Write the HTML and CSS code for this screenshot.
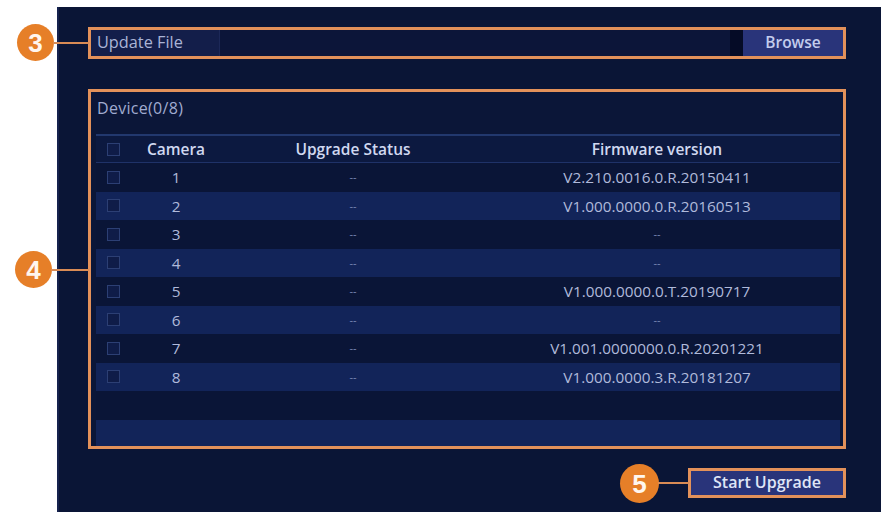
FILE: index.html
```html
<!DOCTYPE html>
<html>
<head>
<meta charset="utf-8">
<link rel="stylesheet" href="styles.css">
</head>
<body>
<div class="page">
  <div class="panel">
    <div class="file-row">
      <span class="file-label">Update File</span>
      <span class="file-input"></span>
      <span class="file-gap"></span>
      <span class="browse">Browse</span>
    </div>
    <div class="device">
      <div class="device-title">Device(0/8)</div>
      <div class="table">
        <div class="row head"><span class="cb"><i></i></span><span>Camera</span><span>Upgrade Status</span><span>Firmware version</span></div>
        <div class="row odd"><span class="cb"><i></i></span><span>1</span><span class="dash">--</span><span>V2.210.0016.0.R.20150411</span></div>
        <div class="row even"><span class="cb"><i></i></span><span>2</span><span class="dash">--</span><span>V1.000.0000.0.R.20160513</span></div>
        <div class="row odd"><span class="cb"><i></i></span><span>3</span><span class="dash">--</span><span class="dash">--</span></div>
        <div class="row even"><span class="cb"><i></i></span><span>4</span><span class="dash">--</span><span class="dash">--</span></div>
        <div class="row odd"><span class="cb"><i></i></span><span>5</span><span class="dash">--</span><span>V1.000.0000.0.T.20190717</span></div>
        <div class="row even"><span class="cb"><i></i></span><span>6</span><span class="dash">--</span><span class="dash">--</span></div>
        <div class="row odd"><span class="cb"><i></i></span><span>7</span><span class="dash">--</span><span>V1.001.0000000.0.R.20201221</span></div>
        <div class="row even"><span class="cb"><i></i></span><span>8</span><span class="dash">--</span><span>V1.000.0000.3.R.20181207</span></div>
        <div class="row odd empty"></div>
        <div class="row even empty"></div>
      </div>
    </div>
    <div class="actions">
      <span class="start">Start Upgrade</span>
    </div>
  </div>

  <div class="callout c3"><span class="num">3</span></div>
  <div class="leader l3"></div>
  <div class="callout c4"><span class="num">4</span></div>
  <div class="leader l4"></div>
  <div class="callout c5"><span class="num">5</span></div>
  <div class="leader l5"></div>
</div>
</body>
</html>
```

FILE: styles.css
```css
* { box-sizing: border-box; }
html, body { margin: 0; padding: 0; background: #ffffff; }
body { font-family: "Open Sans", "Noto Sans", sans-serif; }

.page {
  position: relative;
  width: 881px;
  height: 512px;
  overflow: hidden;
  padding: 7px 0 0 57px;
  background: #ffffff;
}

.panel {
  height: 505px;
  background: #0a1536;
  border-left: 2px solid #15224e;
  padding: 20px 35px 0 29px;
  display: flex;
  flex-direction: column;
}

/* Update file row */
.file-row {
  height: 32px;
  border: 3px solid #e3915a;
  display: flex;
  color: #aab4d6;
}
.file-label {
  width: 128px;
  background: #131e4a;
  padding-left: 6px;
  line-height: 25px;
  font-size: 16.3px;
}
.file-input {
  flex: 1;
  background: #0c1539;
  border-left: 1px solid #1c2858;
}
.file-gap {
  width: 13px;
  background: #050b26;
}
.browse {
  width: 100px;
  background: #29347a;
  text-align: center;
  line-height: 25px;
  color: #c3cced;
  font-size: 15.5px;
  font-weight: 600;
}

/* Device box */
.device {
  margin-top: 30px;
  height: 360px;
  border: 3px solid #e3915a;
  padding: 0 3px 0 5px;
  overflow: hidden;
  background: #0b1638;
}
.device-title {
  height: 42px;
  padding-top: 5px;
  line-height: 22px;
  font-size: 16px;
  color: #a0abd0;
  padding-left: 1px;
  letter-spacing: 0.3px;
}

.table {
  border-top: 2px solid #22386e;
}
.row {
  display: grid;
  grid-template-columns: 34px 92px 262px 346px;
  height: 28.5px;
  align-items: center;
  font-size: 15.3px;
  color: #b0badb;
}
.row > span { text-align: center; line-height: 20px; }
.row > span.cb { display: flex; justify-content: center; }
.cb i {
  display: block;
  width: 13px;
  height: 13px;
  border: 1px solid #2c3f74;
  background: #0f1c48;
}
.head {
  height: 27px;
  background: #0c1940;
  border-bottom: 1px solid #1f3268;
  color: #d0d8f0;
  font-size: 15.5px;
  font-weight: 600;
}
.odd { background: #0a1537; }
.even { background: #122459; }
.dash { color: #7a88b6; font-size: 11px !important; }

/* Start upgrade */
.actions {
  margin-top: 19px;
  display: flex;
  justify-content: flex-end;
}
.start {
  width: 158px;
  height: 30px;
  border: 3px solid #e3915a;
  background: #29347a;
  color: #dfe5f6;
  font-size: 16px;
  font-weight: 600;
  text-align: center;
  line-height: 23px;
}

/* Callouts (annotation overlay) */
.callout {
  position: absolute;
  width: 37px;
  height: 37px;
  border-radius: 50%;
  background: #e67f28;
  display: flex;
  align-items: center;
  justify-content: center;
}
.num {
  color: #fff6ee;
  font-family: "Liberation Sans", "Open Sans", sans-serif;
  font-weight: 700;
  font-size: 26px;
  line-height: 1;
}
.c3 { left: 17px; top: 24px; }
.c4 { left: 15px; top: 251px; }
.c5 { left: 620px; top: 464px; width: 39px; height: 39px; }

.leader {
  position: absolute;
  height: 2px;
  background: #d98b55;
}
.l3 { left: 53px; top: 42px; width: 36px; }
.l4 { left: 51px; top: 269px; width: 38px; }
.l5 { left: 658px; top: 482px; width: 31px; }
```
